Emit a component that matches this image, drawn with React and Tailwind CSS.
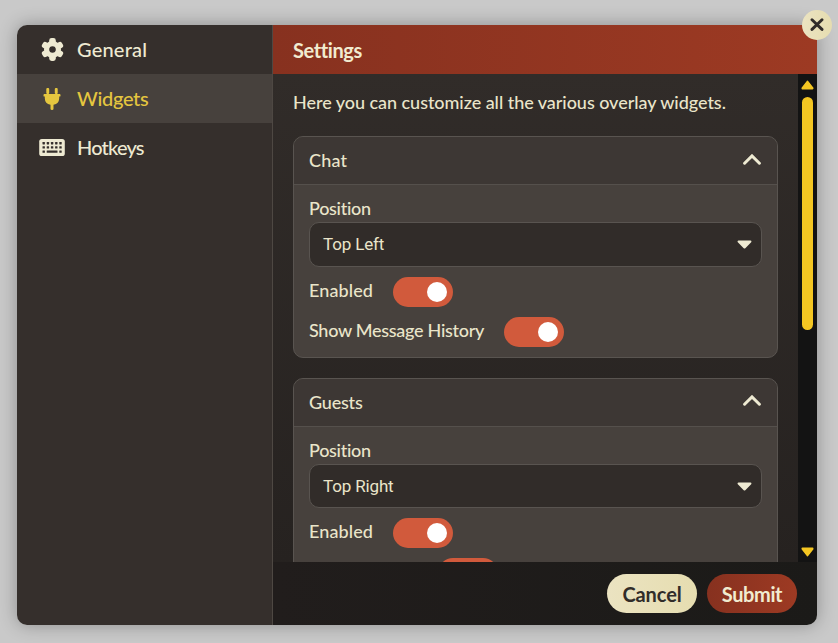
function GearIcon() {
  return (
    <svg className="h-[23px] w-[23px]" viewBox="0 0 23 23">
      <circle cx="11.5" cy="11.5" r="5.9" fill="none" stroke="currentColor" strokeWidth="5.2" />
      {[0, 60, 120, 180, 240, 300].map((angle) => (
        <rect
          key={angle}
          x="8.2"
          y="0.1"
          width="6.6"
          height="7.6"
          rx="2.4"
          fill="currentColor"
          transform={`rotate(${angle} 11.5 11.5)`}
        />
      ))}
    </svg>
  );
}

function PlugIcon() {
  return (
    <svg className="h-[22px] w-[18px]" viewBox="0 0 18 22" fill="currentColor">
      <rect x="3.3" y="0" width="2.9" height="6" rx="1" />
      <rect x="11.8" y="0" width="2.9" height="6" rx="1" />
      <rect x="0.5" y="6" width="17" height="2.6" rx="0.9" />
      <path d="M1.8 8H16.2V10.2A7.2 6.9 0 0 1 10.5 16.8V20.8Q10.5 22 9 22Q7.5 22 7.5 20.8V16.8A7.2 6.9 0 0 1 1.8 10.2Z" />
    </svg>
  );
}

function KeyboardIcon() {
  return (
    <svg className="h-[17px] w-[26px]" viewBox="0 0 26 17">
      <rect x="0.2" y="0" width="25.6" height="17" rx="2.6" fill="currentColor" />
      <g fill="#352f2c">
        {[3.5, 7.7, 11.9, 16.1, 20.3].map((x) => (
          <g key={x}>
            <rect x={x} y="3.1" width="2.4" height="2.4" rx="0.4" />
            <rect x={x} y="7.2" width="2.4" height="2.4" rx="0.4" />
          </g>
        ))}
        <rect x="3.5" y="11.4" width="2.4" height="2.4" rx="0.4" />
        <rect x="7.7" y="11.4" width="10.8" height="2.4" rx="0.4" />
        <rect x="20.3" y="11.4" width="2.4" height="2.4" rx="0.4" />
      </g>
    </svg>
  );
}

const NAV = [
  { label: "General", Icon: GearIcon, color: "text-[#eeead2]", bg: "", track: "tracking-[0.2px]" },
  { label: "Widgets", Icon: PlugIcon, color: "text-[#e5c63f]", bg: "bg-[#47413d]", track: "tracking-[-0.3px]" },
  { label: "Hotkeys", Icon: KeyboardIcon, color: "text-[#eeead2]", bg: "", track: "tracking-[-0.8px]" },
];

function Sidebar() {
  return (
    <nav className="w-[256px] shrink-0 border-r border-[#4e4843] bg-[#352f2c]">
      {NAV.map(({ label, Icon, color, bg, track }) => (
        <div key={label} className={`flex h-[49px] items-center text-xl ${color} ${bg}`}>
          <span className="ml-[22px] flex w-[26px] justify-center">
            <Icon />
          </span>
          <span className={`-mt-px ml-3 ${track}`}>{label}</span>
        </div>
      ))}
    </nav>
  );
}

function Toggle() {
  return (
    <span className="flex h-[30px] w-[60px] shrink-0 items-center justify-end rounded-full bg-[#d15a3c] pr-1.5">
      <span className="size-5 rounded-full bg-white" />
    </span>
  );
}

function Caret({ className, up }) {
  return (
    <svg className={className} viewBox="0 0 14 9" preserveAspectRatio="none">
      <path
        d={up ? "M1.5 7.5H12.5L7 1.5Z" : "M1.5 1.5H12.5L7 7.5Z"}
        fill="currentColor"
        stroke="currentColor"
        strokeWidth="2"
        strokeLinejoin="round"
      />
    </svg>
  );
}

function Chevron({ className }) {
  return (
    <svg className={`mr-px h-[11px] w-[18px] text-[#eeead2] ${className}`} viewBox="0 0 18 11">
      <path d="M1.6 9.2L9 1.9L16.4 9.2" fill="none" stroke="currentColor" strokeWidth="3" strokeLinecap="round" />
    </svg>
  );
}

function Cross() {
  return (
    <svg className="size-[14px]" viewBox="0 0 14 14">
      <path d="M2 1.8L12 11.4M12 1.8L2 11.4" stroke="currentColor" strokeWidth="2.9" strokeLinecap="round" />
    </svg>
  );
}

function Panel({ title, titleClass, chevronClass, value, selectClass, children }) {
  return (
    <section className="shrink-0 rounded-[10px] border border-[#595450] bg-[#47413d]">
      <header className="flex h-12 items-center justify-between rounded-t-[9px] border-b border-[#55504c] bg-[#3d3734] px-[15px]">
        <span className={`-mt-0.5 ${titleClass}`}>{title}</span>
        <Chevron className={chevronClass} />
      </header>
      <div className="px-[15px] pb-2.5 pt-3">
        <div className="mb-px h-6 leading-[23px] tracking-[-0.3px]">Position</div>
        <div className={`flex items-center justify-between rounded-[10px] border border-[#595450] bg-[#312c29] pl-[13px] pr-[9px] font-[Roboto,sans-serif] text-[17px] font-normal tracking-[-0.15px] ${selectClass}`}>
          <span>{value}</span>
          <Caret className="h-[9px] w-[15px] text-[#eeead2]" />
        </div>
        <div className="mt-2.5 flex flex-col gap-2.5">{children}</div>
      </div>
    </section>
  );
}

function Row({ label, width, track }) {
  return (
    <div className="flex h-[30px] items-center gap-5">
      <span className={`-mt-1 whitespace-nowrap ${width} ${track}`}>{label}</span>
      <Toggle />
    </div>
  );
}

export default function App() {
  return (
    <div className="h-[643px] w-[838px] overflow-hidden bg-[#c9c9c9] pl-[17px] pt-[25px] font-[Lato,sans-serif] text-lg font-medium text-[#eae5ca]">
      <div className="relative h-[600px] w-[800px]">
        <div className="flex h-full overflow-hidden rounded-[10px] shadow-[0_0_18px_rgba(0,0,0,0.3)]">
          <Sidebar />
          <main className="flex min-w-0 flex-1 flex-col">
            <header className="flex h-[49px] shrink-0 items-center bg-linear-to-r from-[#87311f] to-[#9d3a23] pl-5 text-xl font-bold text-[#f1ebd0]">
              <span className="tracking-[-0.4px]">Settings</span>
            </header>
            <div className="flex h-[488px] shrink-0 bg-linear-to-b from-[#312c29] to-[#262220]">
              <div className="flex h-full flex-1 flex-col overflow-hidden px-5">
                <p className="h-[62px] shrink-0 whitespace-nowrap pt-3.5 leading-7 tracking-[-0.04px]">
                  Here you can customize all the various overlay widgets.
                </p>
                <div className="flex flex-col gap-5">
                  <Panel title="Chat" titleClass="tracking-[0.2px]" chevronClass="-mt-0.5" value="Top Left" selectClass="h-[45px]">
                    <Row label="Enabled" width="w-16" track="tracking-[0.1px]" />
                    <Row label="Show Message History" width="w-[175px]" track="tracking-[-0.28px]" />
                  </Panel>
                  <Panel title="Guests" titleClass="tracking-[-0.2px]" chevronClass="-mt-1" value="Top Right" selectClass="h-11">
                    <Row label="Enabled" width="w-16" track="tracking-[0.1px]" />
                    <Row label="" width="w-[109px]" track="" />
                  </Panel>
                </div>
              </div>
              <div className="flex w-[19px] shrink-0 flex-col items-center bg-[#131313] text-[#f4c622]">
                <Caret up className="mt-1.5 h-2.5 w-[13px] shrink-0" />
                <div className="mt-[7px] h-[233px] w-[11px] shrink-0 rounded-full bg-[#f4c622]" />
                <Caret className="mb-[5px] mt-auto h-2.5 w-[13px] shrink-0" />
              </div>
            </div>
            <footer className="flex h-[63px] items-center justify-end gap-2.5 bg-linear-to-r from-[#211d1c] to-[#1b1a18] pr-5 text-xl font-bold">
              <button className="h-[39px] w-[90px] rounded-full bg-linear-to-r from-[#ebe3c1] to-[#e6ddb0] tracking-[-0.1px] text-[#312c29]">
                Cancel
              </button>
              <button className="h-[39px] w-[90px] rounded-full bg-linear-to-r from-[#87311f] to-[#9d3a23] tracking-[-0.4px] text-[#f1ebd0]">
                Submit
              </button>
            </footer>
          </main>
        </div>
        <button className="absolute -right-[15px] -top-[15px] flex size-[30px] items-center justify-center rounded-full bg-linear-to-r from-[#ebe3c1] to-[#e6ddb0] text-[#312c29]">
          <Cross />
        </button>
      </div>
    </div>
  );
}
